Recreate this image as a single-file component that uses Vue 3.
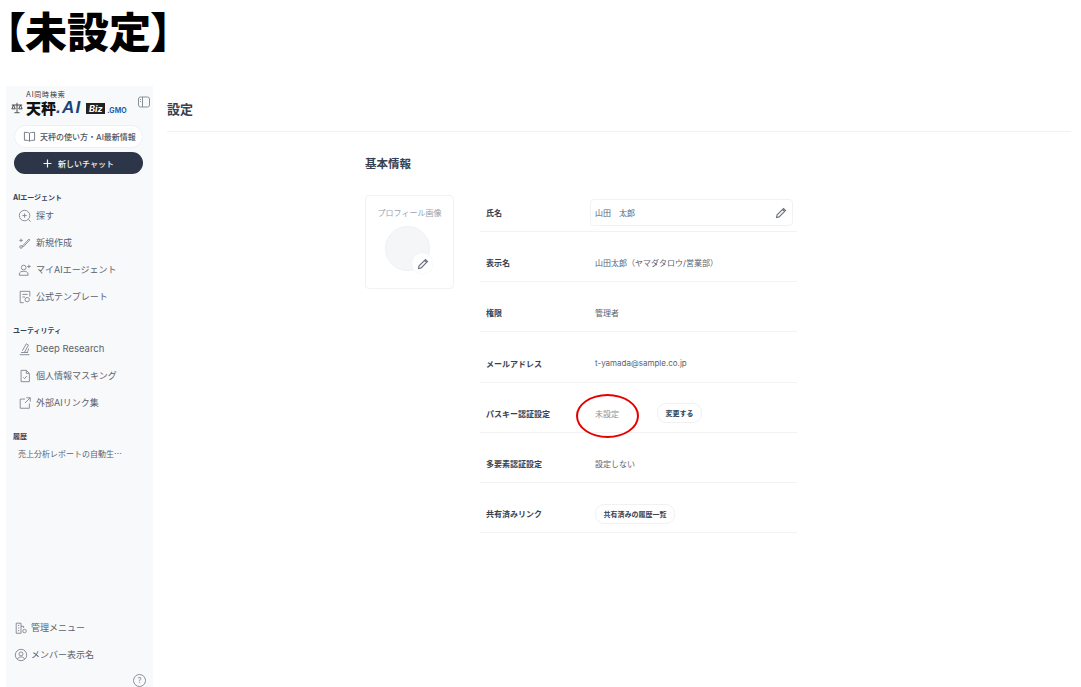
<script setup>
const agentItems = [
  { label: '探す', icon: 'search' },
  { label: '新規作成', icon: 'wand' },
  { label: 'マイAIエージェント', icon: 'user' },
  { label: '公式テンプレート', icon: 'template' },
]
const utilItems = [
  { label: 'Deep Research', icon: 'scope' },
  { label: '個人情報マスキング', icon: 'file' },
  { label: '外部AIリンク集', icon: 'link' },
]
const footerItems = [
  { label: '管理メニュー', icon: 'admin' },
  { label: 'メンバー表示名', icon: 'member' },
]
const paths = {
  search: 'M7.5 1.5a6 6 0 1 1 0 12a6 6 0 0 1 0-12M12 12l2.5 2.5M7.5 5v5M5 7.5h5',
  wand: 'M5 11.5L12.5 3.5L13.5 4.5L6.5 12zM3.5 3v4M1.5 5h4M3.5 11a1.5 1.5 0 1 1 0 3a1.5 1.5 0 0 1 0-3',
  user: 'M6.5 2.5a2.7 2.7 0 1 1 0 5.4a2.7 2.7 0 0 1 0-5.4M1.500 14v-1.500c0-2 2-3 5-3s5 1 5 3V14zM12.500 2v4M10.500 4h4',
  template: 'M6.500 14.500H2.500V1.500h11v6M5 5h6M5 8h3M10.500 8.500a2.500 2.500 0 1 1 0 5a2.500 2.500 0 0 1 0-5',
  scope: 'M2 14.500h11M3.500 12h8M5 10L9.500 2l2.500 1.500L7.500 11.500M12 7.500a4.500 4.500 0 0 1-2 4',
  file: 'M3.500 1.500h6l3.500 3.500v9.500h-9.500zM9.500 1.500V5H13M6 9.500l1.500 1.500l2.500-3',
  link: 'M8 3.500H2.500v10.500H13V8.500M9.500 2H14v4.500M14 2L8 8',
  admin: 'M2.500 14V2.500h5.500V14zM8 6h3v2M4.500 5h1.500M4.500 8h1.500M4.500 11h1.500M12 9.500a2 2 0 1 1 0 4a2 2 0 0 1 0-4',
  member: 'M8 1.500a6.500 6.500 0 1 1 0 13a6.500 6.500 0 0 1 0-13M8 4.500a2.300 2.300 0 1 1 0 4.600a2.300 2.300 0 0 1 0-4.600M4 12.500c.8-1.600 2.200-2.300 4-2.300s3.200.7 4 2.300',
}
</script>

<template>
  <div class="page">
    <h1 class="title">【未設定】</h1>
    <div class="app">
      <aside class="side">
        <div class="brand">
          <div class="brand-top">AI同時検索</div>
          <div class="brand-row">
            <svg class="scale" viewBox="0 0 14 14" fill="none" stroke="#333" stroke-width="1">
              <path d="M7 1v11M4 12.500h6M1 3.500h12M3 3.500L1 8h4zM11 3.500L9 8h4z" />
            </svg>
            <span class="brand-name">天秤</span>
            <span class="brand-ai">.AI</span>
            <span class="brand-biz">Biz</span>
            <span class="brand-gmo">.GMO</span>
          </div>
          <svg class="panel-icon" viewBox="0 0 14 14" fill="none" stroke="#8a909a" stroke-width="1">
            <rect x="1.500" y="2" width="11" height="10" rx="2" />
            <path d="M5.500 2v10M3 4.500h1M3 6.500h1" />
          </svg>
        </div>

        <div class="guide">
          <svg class="guide-icon" viewBox="0 0 14 14" fill="none" stroke="#6b7280" stroke-width="1">
            <path d="M7 3.500C6 2.700 4 2.500 1.500 2.500v8.500c2.500 0 4.500.2 5.500 1c1-.8 3-1 5.500-1V2.500C10 2.500 8 2.700 7 3.500v8.500" />
          </svg>
          天秤の使い方・AI最新情報
        </div>
        <div class="new-chat">
          <svg class="plus" viewBox="0 0 9 9" fill="none" stroke="#f3f4f6" stroke-width="1.200">
            <path d="M4.500 .5v8M.5 4.500h8" />
          </svg>
          新しいチャット
        </div>

        <div class="group first">AIエージェント</div>
        <div v-for="item in agentItems" :key="item.label" class="nav">
          <svg class="nav-icon" viewBox="0 0 16 16" fill="none" stroke="#7b818b" stroke-width="1">
            <path :d="paths[item.icon]" />
          </svg>
          {{ item.label }}
        </div>

        <div class="group">ユーティリティ</div>
        <div v-for="item in utilItems" :key="item.label" class="nav">
          <svg class="nav-icon" viewBox="0 0 16 16" fill="none" stroke="#7b818b" stroke-width="1">
            <path :d="paths[item.icon]" />
          </svg>
          <span :class="{ latin: item.icon === 'scope' }">{{ item.label }}</span>
        </div>

        <div class="group history">履歴</div>
        <div class="history-item">売上分析レポートの自動生…</div>

        <div class="side-foot">
          <div v-for="item in footerItems" :key="item.label" class="nav foot">
            <svg class="nav-icon" viewBox="0 0 16 16" fill="none" stroke="#7b818b" stroke-width="1">
              <path :d="paths[item.icon]" />
            </svg>
            {{ item.label }}
          </div>
          <div class="help">?</div>
        </div>
      </aside>

      <main class="main">
        <header class="head">設定</header>
        <div class="body">
          <h2 class="section">基本情報</h2>
          <div class="columns">
            <div class="card">
              <div class="card-title">プロフィール画像</div>
              <div class="avatar">
                <span class="avatar-edit">
                  <svg class="pencil" viewBox="0 0 12 12" fill="none" stroke="#6b7280" stroke-width="1.100">
                    <path d="M1.500 10.500l.6-2.600L8.500 1.500l2 2L4.100 9.900zM7.500 2.500l2 2" />
                  </svg>
                </span>
              </div>
            </div>

            <div class="rows">
              <div class="row">
                <div class="label">氏名</div>
                <div class="field">
                  山田　太郎
                  <svg class="pencil" viewBox="0 0 12 12" fill="none" stroke="#6b7280" stroke-width="1.100">
                    <path d="M1.500 10.500l.6-2.600L8.500 1.500l2 2L4.100 9.900zM7.500 2.500l2 2" />
                  </svg>
                </div>
              </div>
              <div class="row">
                <div class="label">表示名</div>
                <div class="value">山田太郎（ヤマダタロウ/営業部）</div>
              </div>
              <div class="row">
                <div class="label">権限</div>
                <div class="value">管理者</div>
              </div>
              <div class="row">
                <div class="label">メールアドレス</div>
                <div class="value">t-yamada@sample.co.jp</div>
              </div>
              <div class="row">
                <div class="label">パスキー認証設定</div>
                <div class="value passkey">
                  未設定
                  <span class="circle"></span>
                  <span class="pill change">変更する</span>
                </div>
              </div>
              <div class="row">
                <div class="label">多要素認証設定</div>
                <div class="value">設定しない</div>
              </div>
              <div class="row">
                <div class="label">共有済みリンク</div>
                <div class="value"><span class="pill">共有済みの履歴一覧</span></div>
              </div>
            </div>
          </div>
        </div>
      </main>
    </div>
  </div>
</template>

<style scoped>
.page {
  width: 1081px;
  height: 687px;
  overflow: hidden;
  background: #fff;
  font-family: Inter, "Noto Sans CJK JP", sans-serif;
  color: #374151;
}
.title {
  margin: 0;
  height: 86px;
  padding-left: 4px;
  box-sizing: border-box;
  font-size: 42px;
  line-height: 60px;
  font-weight: 900;
  color: #000;
  font-family: "Noto Sans CJK JP", sans-serif;
  font-feature-settings: "palt";
  white-space: nowrap;
}
.app {
  display: flex;
  height: 601px;
  padding-left: 6px;
}
.side {
  width: 147px;
  flex: none;
  background: #f8f9fb;
  display: flex;
  flex-direction: column;
  padding: 0 10px 0 8px;
  box-sizing: border-box;
}
.brand {
  position: relative;
  height: 39px;
  padding-top: 4px;
  box-sizing: border-box;
}
.brand-top {
  font-size: 7px;
  line-height: 9px;
  margin-left: 12px;
  color: #333;
  letter-spacing: 0.8px;
}
.brand-row {
  display: flex;
  align-items: center;
  height: 16px;
  margin-left: -3px;
  margin-top: 1px;
}
.scale {
  width: 12px;
  height: 12px;
  margin-right: 3px;
}
.brand-name {
  font-size: 15px;
  font-weight: 900;
  color: #111;
  line-height: 16px;
  font-family: "Noto Sans CJK JP", sans-serif;
}
.brand-ai {
  font-size: 17px;
  font-weight: 700;
  font-style: italic;
  color: #17457f;
  line-height: 16px;
  font-family: "Liberation Sans", sans-serif;
  letter-spacing: 1.200px;
  margin-right: 5px;
}
.brand-biz {
  background: #222;
  color: #fff;
  font-size: 9px;
  font-weight: 700;
  font-style: italic;
  line-height: 11px;
  width: 19px;
  text-align: center;
  margin-right: 2px;
}
.brand-gmo {
  font-size: 7px;
  font-weight: 700;
  color: #1f5fa8;
  align-self: flex-end;
  line-height: 11px;
}
.panel-icon {
  position: absolute;
  right: -8px;
  top: 9px;
  width: 14px;
  height: 14px;
}
.guide {
  height: 23px;
  border: 1px solid #eef0f3;
  border-radius: 12px;
  background: #fff;
  display: flex;
  align-items: center;
  font-size: 8px;
  font-weight: 500;
  color: #4b5563;
  box-sizing: border-box;
  padding-left: 8px;
}
.guide-icon {
  width: 13px;
  height: 13px;
  margin-right: 4px;
}
.new-chat {
  margin-top: 4px;
  height: 22px;
  border-radius: 11px;
  background: #2d3648;
  color: #f3f4f6;
  font-size: 8px;
  font-weight: 500;
  display: flex;
  align-items: center;
  justify-content: center;
}
.plus {
  width: 9px;
  height: 9px;
  margin-right: 6px;
}
.group {
  font-size: 7px;
  font-weight: 700;
  color: #374151;
  line-height: 10px;
  margin-top: 16px;
  margin-bottom: -1px;
  margin-left: -1px;
}
.group.first {
  margin-top: 19px;
}
.group.history {
  margin-top: 16px;
  margin-bottom: 5px;
}
.nav {
  height: 27px;
  flex: none;
  display: flex;
  align-items: center;
  font-size: 9px;
  color: #5b626d;
  padding-left: 4px;
}
.latin {
  font-size: 9.500px;
}
.nav-icon {
  width: 14px;
  height: 14px;
  margin-right: 4px;
  flex: none;
}
.nav.foot {
  padding-left: 0;
}
.nav.foot .nav-icon {
  margin-right: 3px;
}
.history-item {
  font-family: "Noto Sans CJK JP", sans-serif;
  font-size: 8px;
  line-height: 14px;
  color: #5b626d;
  margin-left: 4px;
  white-space: nowrap;
}
.side-foot {
  margin-top: auto;
  position: relative;
  padding-bottom: 19px;
}
.help {
  position: absolute;
  right: -3px;
  bottom: 0;
  width: 11px;
  height: 11px;
  border: 1px solid #8a909a;
  border-radius: 50%;
  font-size: 8px;
  line-height: 11px;
  text-align: center;
  color: #8a909a;
}
.main {
  flex: 1;
  padding: 0 10px 0 14px;
  min-width: 0;
}
.head {
  height: 45px;
  border-bottom: 1px solid #f0f1f3;
  font-size: 13px;
  font-weight: 700;
  line-height: 47px;
  color: #374151;
}
.body {
  padding-left: 198px;
}
.section {
  margin: 24px 0 0;
  font-size: 11.500px;
  line-height: 16px;
  font-weight: 700;
  color: #374151;
}
.columns {
  display: flex;
  align-items: flex-start;
  margin-top: 23px;
}
.card {
  width: 89px;
  height: 94px;
  border: 1px solid #f1f2f4;
  border-radius: 4px;
  box-sizing: border-box;
  display: flex;
  flex-direction: column;
  align-items: center;
  padding-top: 11px;
}
.card-title {
  font-size: 8px;
  line-height: 12px;
  color: #9ca3af;
}
.avatar {
  position: relative;
  width: 45px;
  height: 45px;
  margin-top: 7px;
  margin-right: 4px;
  border-radius: 50%;
  background: #f5f6f8;
  border: 1px solid #f0f1f3;
  box-sizing: border-box;
}
.avatar-edit {
  position: absolute;
  right: -4px;
  bottom: -4px;
  width: 21px;
  height: 21px;
  border-radius: 50%;
  background: #fff;
  box-shadow: 0 0 1px #e5e7eb;
  display: flex;
  align-items: center;
  justify-content: center;
}
.pencil {
  width: 12px;
  height: 12px;
  flex: none;
}
.rows {
  width: 317px;
  margin-left: 26px;
  margin-top: -13px;
}
.row {
  height: 50.170px;
  box-sizing: border-box;
  border-bottom: 1px solid #f1f2f4;
  display: flex;
  align-items: center;
  padding: 12px 0 0 6px;
}
.label {
  width: 109px;
  flex: none;
  font-size: 8px;
  font-weight: 700;
  color: #374151;
}
.value {
  font-size: 8px;
  color: #5b626d;
}
.field {
  width: 203px;
  height: 27px;
  margin-left: -5px;
  padding: 0 5px 0 4px;
  border: 1px solid #f1f2f4;
  border-radius: 4px;
  box-sizing: border-box;
  font-size: 8px;
  color: #5b626d;
  display: flex;
  align-items: center;
  justify-content: space-between;
}
.passkey {
  position: relative;
  display: flex;
  align-items: center;
  color: #8a909a;
}
.circle {
  position: absolute;
  left: -19px;
  top: -9px;
  width: 63px;
  height: 44px;
  box-sizing: border-box;
  border: 2px solid #e60000;
  border-radius: 50%;
}
.pill {
  display: inline-flex;
  align-items: center;
  height: 18px;
  padding: 0 7.500px;
  border: 1px solid #f0f1f3;
  border-radius: 9px;
  font-size: 7px;
  font-weight: 700;
  color: #374151;
  background: #fff;
}
.change {
  margin-left: 38px;
}
</style>

<style>
body {
  background: #fff;
}
</style>
